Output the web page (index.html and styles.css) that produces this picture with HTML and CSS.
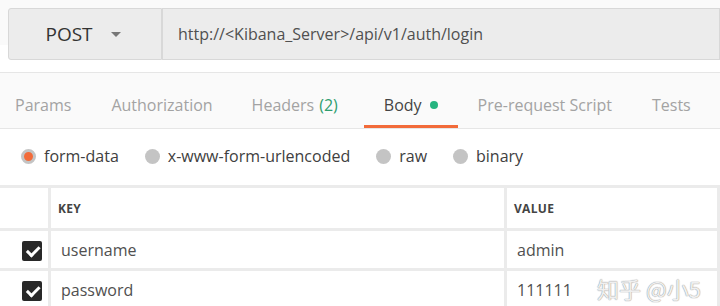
FILE: index.html
```html
<!DOCTYPE html>
<html lang="en">
<head>
    <meta charset="UTF-8">
    <title>Postman - login request</title>
    <link rel="stylesheet" href="styles.css">
</head>
<body>
    <div class="page">
        <!-- request bar -->
        <div class="request-bar">
            <div class="method">
                <span>POST</span>
                <span class="caret"></span>
            </div>
            <div class="url">http://&lt;Kibana_Server&gt;/api/v1/auth/login</div>
        </div>

        <!-- tabs -->
        <ul class="tabs">
            <li class="tab">Params</li>
            <li class="tab">Authorization</li>
            <li class="tab headers">Headers <span class="count">(2)</span></li>
            <li class="tab active">Body <span class="dot"></span></li>
            <li class="tab">Pre-request Script</li>
            <li class="tab">Tests</li>
        </ul>

        <!-- body types -->
        <div class="body-types">
            <label class="radio checked"><span class="circle"></span>form-data</label>
            <label class="radio"><span class="circle"></span>x-www-form-urlencoded</label>
            <label class="radio"><span class="circle"></span>raw</label>
            <label class="radio"><span class="circle"></span>binary</label>
        </div>

        <!-- key / value table -->
        <table class="kv-table">
            <thead>
                <tr>
                    <th class="col-check"></th>
                    <th class="col-key">KEY</th>
                    <th>VALUE</th>
                </tr>
            </thead>
            <tbody>
                <tr>
                    <td class="col-check"><span class="checkbox"></span></td>
                    <td>username</td>
                    <td>admin</td>
                </tr>
                <tr>
                    <td class="col-check"><span class="checkbox"></span></td>
                    <td>password</td>
                    <td>111111</td>
                </tr>
            </tbody>
        </table>

        <div class="watermark">知乎 @小5</div>
    </div>
</body>
</html>
```

FILE: styles.css
```css
:root {
    --orange: #f26b3a;
    --green: #26b47f;
    --text: #404040;
    --muted: #a3a3a3;
    --line: #ebebeb;
}

body {
    margin: 0;
    font-family: 'Open Sans', 'Noto Sans', sans-serif;
    color: var(--text);
    background: #fff;
    overflow: hidden;
}

.page {
    position: relative;
    width: 720px;
    height: 306px;
    overflow: hidden;
}

/* request bar */
.request-bar {
    display: flex;
    padding: 8px 0 12px 8px;
    border-bottom: 1px solid #e6e6e6;
    background: linear-gradient(#fafafa 62%, #fff 62%);
}

.method {
    width: 148px;
    height: 50px;
    display: flex;
    align-items: center;
    justify-content: center;
    gap: 18px;
    background: #ececec;
    border: 1px solid #d8d8d8;
    border-radius: 3px 0 0 3px;
    font-size: 19px;
    color: #333;
    padding-right: 4px;
    box-sizing: content-box;
}

.caret {
    width: 0;
    height: 0;
    border-left: 5px solid transparent;
    border-right: 5px solid transparent;
    border-top: 5px solid #777;
    margin-top: 1px;
}

.url {
    flex: 1;
    height: 50px;
    display: flex;
    align-items: center;
    padding-left: 15px;
    background: #ececec;
    border: 1px solid #d8d8d8;
    font-size: 16px;
    color: #505050;
    white-space: nowrap;
}

/* tabs */
.tabs {
    list-style: none;
    margin: 0;
    padding: 0;
    display: flex;
    height: 55px;
    background: #fafafa;
    border-bottom: 1px solid #e6e6e6;
}

.tab {
    display: flex;
    align-items: center;
    gap: 5px;
    padding: 12px 20px 0;
    font-size: 16px;
    color: var(--muted);
    white-space: nowrap;
    border-bottom: 3px solid transparent;
}

.tab:first-child {
    padding-left: 15px;
}

.tab.headers {
    padding-left: 19px;
    padding-right: 26px;
}

.tab .count {
    color: #2e9d6e;
}

.tab.active {
    color: #444;
    border-bottom-color: var(--orange);
}

.dot {
    width: 8px;
    height: 8px;
    border-radius: 50%;
    background: var(--green);
    margin-left: 3px;
}

/* body types */
.body-types {
    display: flex;
    align-items: center;
    height: 54px;
    padding-left: 21px;
    gap: 26px;
}

.radio {
    display: flex;
    align-items: center;
    gap: 8px;
    font-size: 16px;
    color: #404040;
}

.circle {
    width: 15px;
    height: 15px;
    border-radius: 50%;
    background: #c4c4c4;
    box-sizing: border-box;
}

.radio.checked .circle {
    background: var(--orange);
    border: 3px solid #c4c4c4;
}

/* table */
.kv-table {
    border-collapse: collapse;
    width: 100%;
    margin-top: 2px;
    table-layout: fixed;
}

.kv-table th,
.kv-table td {
    border: 3px solid var(--line);
    text-align: left;
    padding: 0 10px;
}

.kv-table tr > :first-child {
    border-left: none;
}

.kv-table th {
    height: 40px;
    padding: 0 7px;
    font-size: 12px;
    font-weight: 700;
    color: #444;
    letter-spacing: 0.3px;
}

.kv-table td {
    height: 37px;
    font-size: 16px;
    color: #505050;
}

.col-check {
    width: 34px;
}

.kv-table td.col-check {
    text-align: right;
    padding: 0 6px 0 0;
}

.col-key {
    width: 439px;
}

.checkbox {
    display: inline-block;
    position: relative;
    width: 20px;
    height: 20px;
    background: #282828;
    border-radius: 2px;
    vertical-align: middle;
}

.checkbox::after {
    content: "";
    position: absolute;
    left: 4px;
    top: 3px;
    width: 10px;
    height: 5px;
    border-left: 3px solid #fff;
    border-bottom: 3px solid #fff;
    transform: rotate(-45deg) translate(-1px, 2px);
}

.watermark {
    position: absolute;
    left: 597px;
    top: 272px;
    font-family: 'Noto Sans CJK SC', sans-serif;
    font-size: 22px;
    color: rgba(255, 255, 255, 0.85);
    text-shadow: 0 0 1px #999, 0 0 1px #999;
    white-space: nowrap;
}
```
